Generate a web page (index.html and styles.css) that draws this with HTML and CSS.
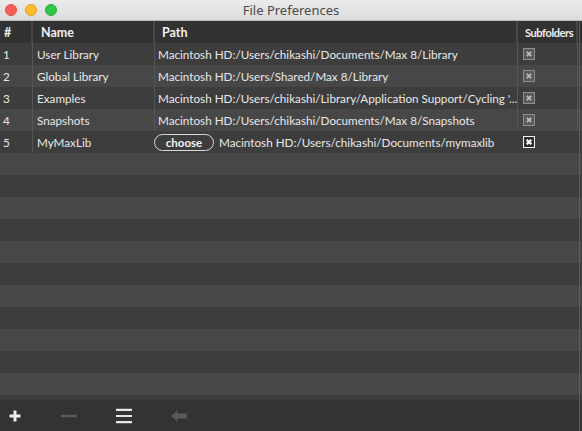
FILE: index.html
```html
<!DOCTYPE html>
<html>
<head>
<meta charset="utf-8">
<title>File Preferences</title>
<link rel="stylesheet" href="styles.css">
</head>
<body>
<div class="window">
  <div class="titlebar">
    <div class="lights">
      <span class="dot red"></span>
      <span class="dot yellow"></span>
      <span class="dot green"></span>
    </div>
    <div class="title">File Preferences</div>
  </div>
  <div class="table">
    <div class="row head">
      <div class="c num">#</div>
      <div class="c name">Name</div>
      <div class="c path">Path</div>
      <div class="c sub">Subfolders</div>
      <div class="c tail"></div>
    </div>
    <div class="row odd">
      <div class="c num">1</div>
      <div class="c name">User Library</div>
      <div class="c path">Macintosh HD:/Users/chikashi/Documents/Max 8/Library</div>
      <div class="c sub"><svg class="cb" width="12" height="12" viewBox="0 0 12 12"><rect x="0.5" y="0.5" width="11" height="11" fill="#5a5a5a" stroke="#8e8e8e"/><path d="M3.8 3.8L8.2 8.2M8.2 3.8L3.8 8.2" stroke="#bdbdbd" stroke-width="1.7"/></svg></div>
      <div class="c tail"></div>
    </div>
    <div class="row even">
      <div class="c num">2</div>
      <div class="c name">Global Library</div>
      <div class="c path">Macintosh HD:/Users/Shared/Max 8/Library</div>
      <div class="c sub"><svg class="cb" width="12" height="12" viewBox="0 0 12 12"><rect x="0.5" y="0.5" width="11" height="11" fill="#5a5a5a" stroke="#8e8e8e"/><path d="M3.8 3.8L8.2 8.2M8.2 3.8L3.8 8.2" stroke="#bdbdbd" stroke-width="1.7"/></svg></div>
      <div class="c tail"></div>
    </div>
    <div class="row odd">
      <div class="c num">3</div>
      <div class="c name">Examples</div>
      <div class="c path path-long">Macintosh HD:/Users/chikashi/Library/Application Support/Cycling '...</div>
      <div class="c sub"><svg class="cb" width="12" height="12" viewBox="0 0 12 12"><rect x="0.5" y="0.5" width="11" height="11" fill="#5a5a5a" stroke="#8e8e8e"/><path d="M3.8 3.8L8.2 8.2M8.2 3.8L3.8 8.2" stroke="#bdbdbd" stroke-width="1.7"/></svg></div>
      <div class="c tail"></div>
    </div>
    <div class="row even">
      <div class="c num">4</div>
      <div class="c name">Snapshots</div>
      <div class="c path">Macintosh HD:/Users/chikashi/Documents/Max 8/Snapshots</div>
      <div class="c sub"><svg class="cb" width="12" height="12" viewBox="0 0 12 12"><rect x="0.5" y="0.5" width="11" height="11" fill="#5a5a5a" stroke="#8e8e8e"/><path d="M3.8 3.8L8.2 8.2M8.2 3.8L3.8 8.2" stroke="#bdbdbd" stroke-width="1.7"/></svg></div>
      <div class="c tail"></div>
    </div>
    <div class="row odd edit">
      <div class="c num">5</div>
      <div class="c name name-edit">MyMaxLib</div>
      <div class="c path path-edit"><span class="choose">choose</span><span>Macintosh HD:/Users/chikashi/Documents/mymaxlib</span></div>
      <div class="c sub sub-edit"><svg class="cb" width="12" height="12" viewBox="0 0 12 12"><rect x="0.5" y="0.5" width="11" height="11" fill="#2e2e2e" stroke="#f2f2f2"/><path d="M3.7 3.7L8.3 8.3M8.3 3.7L3.7 8.3" stroke="#ffffff" stroke-width="2.2"/></svg></div>
      <div class="c tail"></div>
    </div>
    <div class="row even"></div>
    <div class="row odd"></div>
    <div class="row even"></div>
    <div class="row odd"></div>
    <div class="row even"></div>
    <div class="row odd"></div>
    <div class="row even"></div>
    <div class="row odd"></div>
    <div class="row even"></div>
    <div class="row odd"></div>
    <div class="row even"></div>
    <div class="row odd"></div>
  </div>
  <div class="toolbar">
    <svg class="tool" width="16" height="16" viewBox="0 0 16 16"><path d="M8 2.5V13.5M2.5 8H13.5" stroke="#eeeeee" stroke-width="3"/></svg>
    <svg class="tool" width="18" height="16" viewBox="0 0 18 16"><path d="M1 8H17" stroke="#595959" stroke-width="2.5"/></svg>
    <svg class="tool" width="18" height="16" viewBox="0 0 18 16"><path d="M1 1.8H17M1 8H17M1 14.2H17" stroke="#e6e6e6" stroke-width="2.2"/></svg>
    <svg class="tool" width="18" height="16" viewBox="0 0 18 16"><path d="M1 8L7.5 2.5V5.5H17V10.5H7.5V13.5Z" fill="#595959"/></svg>
  </div>
  <div class="edge"></div>
</div>
</body>
</html>
```
FILE: styles.css
```css
html, body {
  margin: 0;
  padding: 0;
  background: #333333;
}
.window {
  width: 582px;
  height: 431px;
  display: flex;
  flex-direction: column;
  overflow: hidden;
  position: relative;
  font-family: Lato, "Open Sans", sans-serif;
}
.edge {
  position: absolute;
  top: 21px;
  bottom: 0;
  right: 2px;
  width: 1px;
  background: #5e5e5e;
}
.titlebar {
  height: 20px;
  flex: 0 0 20px;
  background: linear-gradient(#ebebeb, #dcdcdc);
  border-bottom: 1px solid #b9b9b9;
  display: flex;
  align-items: center;
  position: relative;
}
.lights {
  display: flex;
  gap: 8px;
  padding-left: 5px;
  position: absolute;
  left: 0;
  top: 4px;
}
.dot {
  width: 12px;
  height: 12px;
  border-radius: 50%;
  box-sizing: border-box;
}
.red { background: #fc5f57; border: 0.5px solid #df4a42; }
.yellow { background: #fdbc2e; border: 0.5px solid #dea123; }
.green { background: #33c748; border: 0.5px solid #27a93a; }
.title {
  flex: 1;
  text-align: center;
  font-family: "Noto Sans", "Liberation Sans", sans-serif;
  font-size: 13px;
  color: #4b4b4b;
  line-height: 20px;
}
.table {
  flex: 1;
  overflow: hidden;
  background: #3e3e3e;
}
.row {
  height: 22px;
  display: flex;
  align-items: stretch;
  color: #e8e8e8;
  font-size: 11.7px;
}
.row.odd { background: #3d3d3d; }
.row.even { background: #474747; }
.row.head {
  background: #323232;
  font-weight: 700;
  color: #f0f0f0;
  font-size: 12.5px;
}
.c {
  box-sizing: border-box;
  display: flex;
  align-items: center;
  white-space: nowrap;
  overflow: hidden;
  border-right: 1px solid #565656;
}
.head .c { border-right: 2px solid #474747; }
.num { width: 33px; padding-left: 3px; }
.head .num { padding-left: 4px; }
.name { width: 122px; padding-left: 4px; }
.head .name { padding-left: 8px; }
.path { width: 363px; padding-left: 3px; }
.path-long { overflow: visible; }
.head .path { padding-left: 7px; }
.sub { width: 60px; padding-left: 5px; }
.head .sub {
  padding-left: 7px;
  font-size: 11px;
  letter-spacing: -0.4px;
}
.tail { flex: 1; border-right: 0; }
.head .tail { border-right: 0; background: #2e2e2e; }
.cb { display: block; }
.edit .name-edit { border-right-color: transparent; }
.path-edit {
  margin-left: -1px;
  width: 364px;
  padding-left: 0;
  gap: 5px;
  border-right-color: transparent;
}
.choose {
  box-sizing: border-box;
  flex: 0 0 60px;
  width: 60px;
  height: 17px;
  border: 1px solid #d9d9d9;
  border-radius: 9px;
  font-size: 11.5px;
  font-weight: 700;
  display: flex;
  align-items: center;
  justify-content: center;
  color: #f2f2f2;
}
.sub-edit { padding-left: 5px; border-right-color: transparent; }
.toolbar {
  height: 31px;
  flex: 0 0 31px;
  background: #333333;
  display: flex;
  align-items: center;
  padding-left: 7px;
  gap: 37px;
}
.tool { display: block; }
```
